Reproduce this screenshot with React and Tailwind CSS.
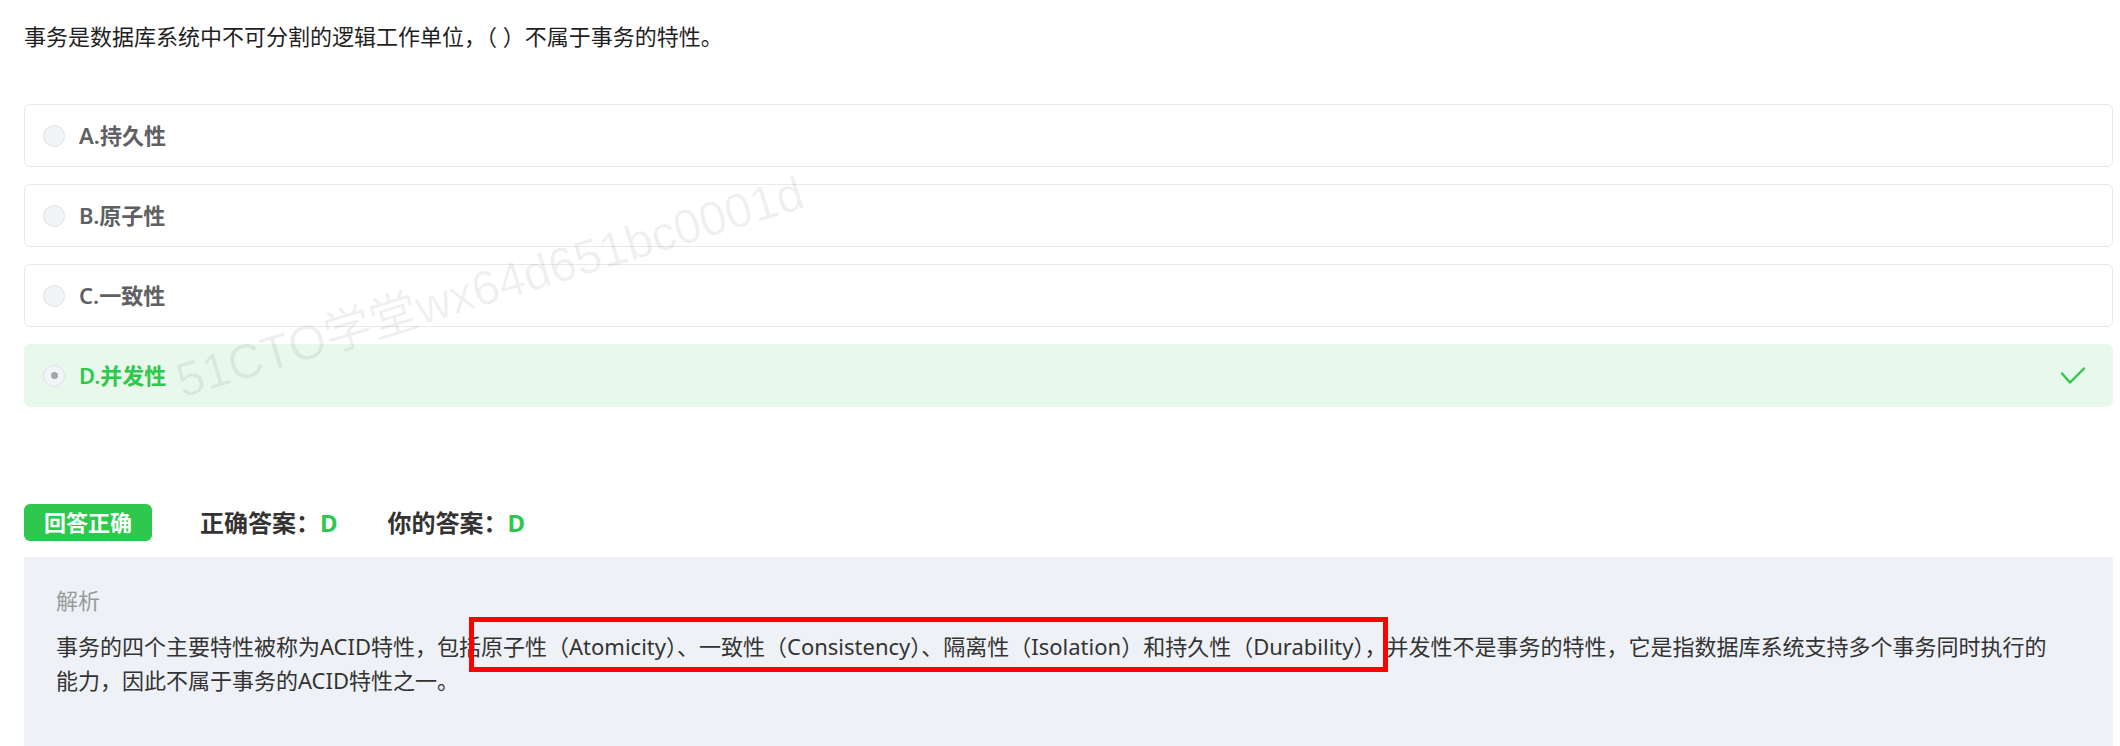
const options = [
  { key: 'A', text: '持久性' },
  { key: 'B', text: '原子性' },
  { key: 'C', text: '一致性' },
  { key: 'D', text: '并发性', correct: true, picked: true },
]

function Radio({ picked }) {
  return (
    <span className="flex h-[22px] w-[22px] flex-shrink-0 items-center justify-center rounded-full border border-[#dfe1e8] bg-[#f3f4f8]">
      {picked && <span className="h-[7px] w-[7px] rounded-full bg-[#a3a5ab]" />}
    </span>
  )
}

function OptionRow({ opt }) {
  return (
    <div
      className={
        opt.correct
          ? 'flex h-[63px] items-center justify-between rounded-[6px] border border-transparent bg-[#e8f8ea] pl-[18px] pr-[27px]'
          : 'flex h-[63px] items-center justify-between rounded-[6px] border border-[#e8e9ef] bg-white pl-[18px] pr-[27px]'
      }
    >
      <div className="flex items-center">
        <Radio picked={opt.picked} />
        <span
          className={
            opt.correct
              ? 'ml-[14px] text-[22px] font-semibold text-[#2dc84d]'
              : 'ml-[14px] text-[22px] font-semibold text-[#5f6064]'
          }
        >
          {opt.key}.{opt.text}
        </span>
      </div>
      {opt.correct && (
        <svg width="24" height="17" viewBox="0 0 24 17" fill="none">
          <polyline points="1,6.5 9,15.5 23,1.5" stroke="#2dc84d" strokeWidth="2.4" strokeLinecap="round" strokeLinejoin="round" />
        </svg>
      )}
    </div>
  )
}

export default function App() {
  return (
    <div className="relative min-h-[746px] overflow-hidden bg-white pl-[24px] pr-[7px] pt-[21px] font-['Noto_Sans','Noto_Sans_CJK_SC',sans-serif]">
      <p className="text-[22px] leading-[30px] text-[#1f1f1f]">
        事务是数据库系统中不可分割的逻辑工作单位，（ ）不属于事务的特性。
      </p>

      <div className="mt-[53px] flex flex-col gap-[17px]">
        {options.map(opt => (
          <OptionRow key={opt.key} opt={opt} />
        ))}
      </div>

      <div className="mt-[97px] flex items-center">
        <span className="flex h-[37px] items-center rounded-[6px] bg-[#2dc84d] px-[20px] text-[22px] font-semibold text-white">
          回答正确
        </span>
        <span className="ml-[48px] text-[24px] font-bold text-[#333333]">
          正确答案：<span className="text-[#2dc84d]">D</span>
        </span>
        <span className="ml-[50px] text-[24px] font-bold text-[#333333]">
          你的答案：<span className="text-[#2dc84d]">D</span>
        </span>
      </div>

      <div className="relative mt-[16px] bg-[#eef1f6] px-[32px] pb-[70px] pt-[28px]">
        <p className="text-[22px] leading-[30px] text-[#9a9a9a]">解析</p>
        <p className="mt-[14px] text-[22px] leading-[34px] text-[#333333]">
          事务的四个主要特性被称为ACID特性，包括原子性（Atomicity）、一致性（Consistency）、隔离性（Isolation）和持久性（Durability），并发性不是事务的特性，它是指数据库系统支持多个事务同时执行的
          <br />
          能力，因此不属于事务的ACID特性之一。
        </p>
        {/* highlight frame */}
        <div className="pointer-events-none absolute left-[445px] top-[60px] h-[55px] w-[919px] border-[5px] border-[#ff0000]" />
      </div>

      {/* watermark */}
      <div className="pointer-events-none absolute left-[490px] top-[287px] -translate-x-1/2 -translate-y-1/2 -rotate-[17deg] whitespace-nowrap font-['Liberation_Sans','Noto_Sans_CJK_SC',sans-serif] text-[48px] text-[rgba(0,0,0,0.06)]">
        51CTO学堂wx64d651bc0001d
      </div>
    </div>
  )
}
